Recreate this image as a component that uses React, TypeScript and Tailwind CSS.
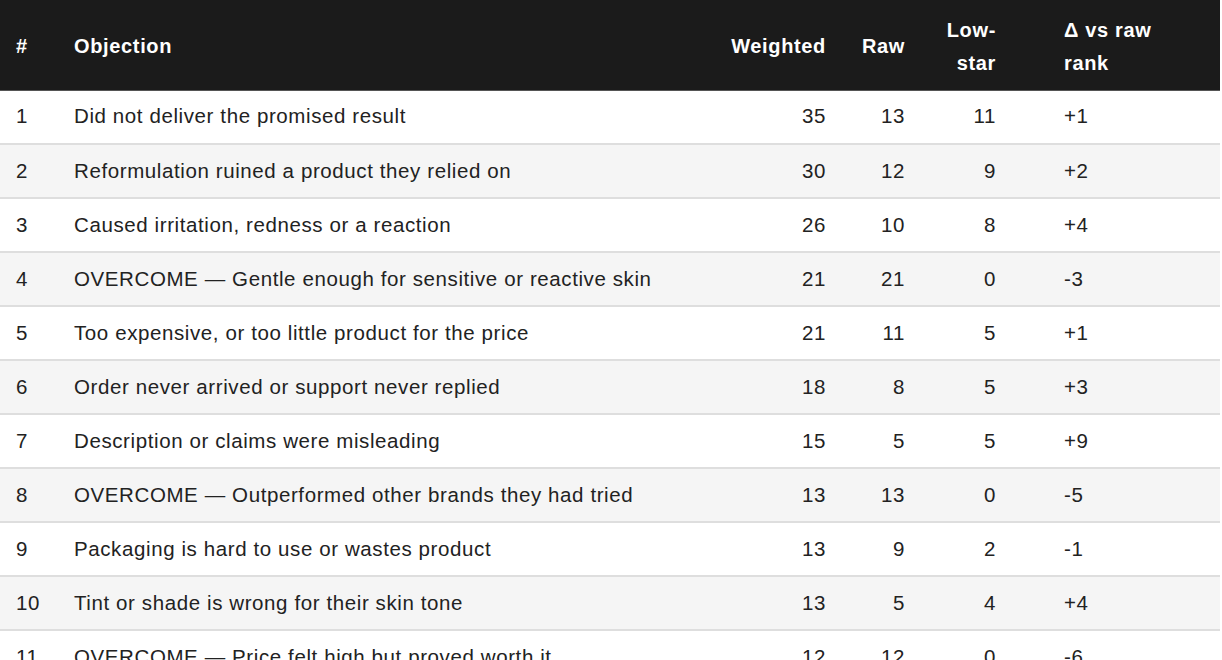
import React from "react";

const rows: [string, string, string, string, string, string][] = [
  ["1", "Did not deliver the promised result", "35", "13", "11", "+1"],
  ["2", "Reformulation ruined a product they relied on", "30", "12", "9", "+2"],
  ["3", "Caused irritation, redness or a reaction", "26", "10", "8", "+4"],
  ["4", "OVERCOME — Gentle enough for sensitive or reactive skin", "21", "21", "0", "-3"],
  ["5", "Too expensive, or too little product for the price", "21", "11", "5", "+1"],
  ["6", "Order never arrived or support never replied", "18", "8", "5", "+3"],
  ["7", "Description or claims were misleading", "15", "5", "5", "+9"],
  ["8", "OVERCOME — Outperformed other brands they had tried", "13", "13", "0", "-5"],
  ["9", "Packaging is hard to use or wastes product", "13", "9", "2", "-1"],
  ["10", "Tint or shade is wrong for their skin tone", "13", "5", "4", "+4"],
  ["11", "OVERCOME — Price felt high but proved worth it", "12", "12", "0", "-6"],
];

export default function App() {
  return (
    <div
      className="w-[1222px] h-[660px] overflow-hidden bg-white text-[#222]"
      style={{ fontFamily: '"Liberation Sans", Arial, sans-serif' }}
    >
      <table className="w-[1220px] table-fixed border-collapse text-[20.5px] tracking-[0.6px]">
        <colgroup>
          <col className="w-[58px]" />
          <col className="w-[658px]" />
          <col className="w-[126px]" />
          <col className="w-[79px]" />
          <col className="w-[91px]" />
          <col className="w-[208px]" />
        </colgroup>
        <thead>
          <tr className="h-[90px] bg-[#1b1b1b] text-white font-bold border-b border-[#555] leading-[33px] text-[20px] tracking-[0.65px]">
            <th className="pl-4 pt-[3px] text-left align-middle font-bold">#</th>
            <th className="pl-4 pt-[3px] text-left align-middle font-bold">Objection</th>
            <th className="pr-4 pt-[3px] text-right align-middle font-bold">Weighted</th>
            <th className="pr-4 pt-[3px] text-right align-middle font-bold">Raw</th>
            <th className="pr-4 pt-[5px] text-right align-middle font-bold">
              Low-
              <br />
              star
            </th>
            <th className="pl-[52px] pt-[5px] text-left align-middle font-bold">
              Δ vs raw
              <br />
              rank
            </th>
          </tr>
        </thead>
        <tbody>
          {rows.map((r, i) => (
            <tr
              key={r[0]}
              className={`h-[54px] border-b-2 border-[#dedede] ${i % 2 === 1 ? "bg-[#f5f5f5]" : "bg-white"}`}
            >
              <td className="pl-4 text-left align-middle">{r[0]}</td>
              <td className="pl-4 text-left align-middle">{r[1]}</td>
              <td className="pr-4 text-right align-middle">{r[2]}</td>
              <td className="pr-4 text-right align-middle">{r[3]}</td>
              <td className="pr-4 text-right align-middle">{r[4]}</td>
              <td className="pl-[52px] text-left align-middle">{r[5]}</td>
            </tr>
          ))}
        </tbody>
      </table>
    </div>
  );
}
